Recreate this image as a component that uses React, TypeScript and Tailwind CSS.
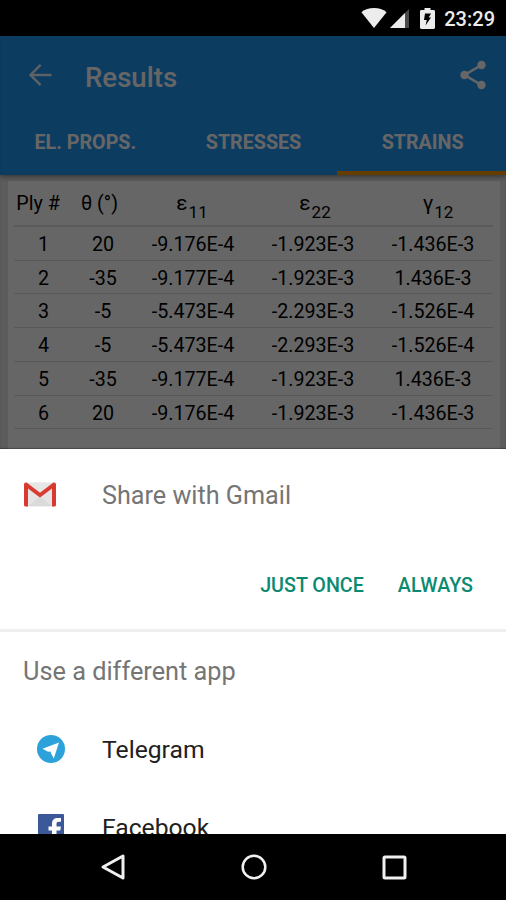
import React from "react";

interface PlyRow {
  angle: string;
  e11: string;
  e22: string;
  g12: string;
}

const PLIES: PlyRow[] = [
  { angle: "20", e11: "-9.176E-4", e22: "-1.923E-3", g12: "-1.436E-3" },
  { angle: "-35", e11: "-9.177E-4", e22: "-1.923E-3", g12: "1.436E-3" },
  { angle: "-5", e11: "-5.473E-4", e22: "-2.293E-3", g12: "-1.526E-4" },
  { angle: "-5", e11: "-5.473E-4", e22: "-2.293E-3", g12: "-1.526E-4" },
  { angle: "-35", e11: "-9.177E-4", e22: "-1.923E-3", g12: "1.436E-3" },
  { angle: "20", e11: "-9.176E-4", e22: "-1.923E-3", g12: "-1.436E-3" },
];

function StatusBar() {
  return (
    <div className="flex h-9 shrink-0 items-center justify-end bg-black pr-[11px] text-[#ececec]">
      <svg width="26" height="20" viewBox="0 0 26 20" fill="currentColor">
        <path d="M13 20 0.4 4.2C4 1.4 8 0 13 0s9 1.4 12.6 4.2z" />
      </svg>
      <svg className="ml-[3px]" width="19" height="19" viewBox="0 0 19 19">
        <path d="M0 19 19 0v19z" fill="#4a4a4a" />
        <path d="M0 19 15 4v15z" fill="currentColor" />
      </svg>
      <svg className="ml-[11px]" width="15" height="21" viewBox="0 0 15 21">
        <path d="M4.500 0h6v2h3.100c.8 0 1.400.6 1.400 1.400v16.200c0 .8-.6 1.400-1.400 1.400H1.400C.6 21 0 20.400 0 19.600V3.400C0 2.600.6 2 1.400 2h3.100z" fill="currentColor" />
        <path d="M5 5.500h6L8.700 9.500H11L5.500 17.500 6.800 12H4z" fill="#000" />
      </svg>
      <span className="ml-[9px] pt-[2px] text-[20px] leading-9 font-medium">23:29</span>
    </div>
  );
}

function Toolbar() {
  return (
    <div className="flex h-20 items-center pr-[19px] pl-7 text-white">
      <svg className="-mt-[2px] opacity-90" width="24" height="24" viewBox="0 0 24 24" fill="none" stroke="currentColor" strokeWidth="2.4">
        <path d="M23.500 12H2.500M12.600 1.900 2.500 12l10.100 10.100" />
      </svg>
      <h1 className="ml-[33px] flex-1 pt-[3px] text-[27.600px] font-medium">Results</h1>
      <svg className="-mt-[2px]" width="28" height="30" viewBox="0 0 28 30" fill="currentColor" stroke="none">
        <path d="M22.500 5 5.500 15l17 10" fill="none" stroke="currentColor" strokeWidth="2.600" />
        <circle cx="5.500" cy="15" r="4.200" />
        <circle cx="22.500" cy="5" r="4.200" />
        <circle cx="22.500" cy="25" r="4.200" />
      </svg>
    </div>
  );
}

function Tabs() {
  return (
    <div className="grid h-[59px] grid-cols-3 text-center text-[19.700px] leading-[53px] font-bold text-white">
      <div className="pl-[2px]">EL. PROPS.</div>
      <div className="pl-px">STRESSES</div>
      <div className="border-b-4 border-[#ff9800] pl-[2px]">STRAINS</div>
    </div>
  );
}

function Strain({ symbol, index }: { symbol: string; index: string }) {
  return (
    <>
      <span className="text-[21px]">{symbol}</span>
      <sub className="-bottom-[8px] ml-px text-[17px]">{index}</sub>
    </>
  );
}

function StrainTable() {
  return (
    <table className="w-[479px] table-fixed border-collapse text-center text-[19.700px] text-black">
      <colgroup>
        <col className="w-[59px]" />
        <col className="w-[60px]" />
        <col />
        <col />
        <col />
      </colgroup>
      <thead>
        <tr className="h-[45px] border-b-2 border-[#e0e0e0]">
          <th className="p-0 pt-[2px] pr-[11px] font-normal whitespace-nowrap">Ply #</th>
          <th className="p-0 pt-[2px] pr-[7px] font-normal whitespace-nowrap">θ (°)</th>
          <th className="p-0 pt-[2px] pr-[2px] font-normal">
            <Strain symbol="ε" index="11" />
          </th>
          <th className="p-0 pt-[2px] pl-[4px] font-normal">
            <Strain symbol="ε" index="22" />
          </th>
          <th className="p-0 pt-[2px] pl-[10px] font-normal">
            <Strain symbol="γ" index="12" />
          </th>
        </tr>
      </thead>
      <tbody>
        {PLIES.map((ply, i) => (
          <tr key={i} className="h-[33.750px] border-b border-[#dedede]">
            <td className="p-0 pt-[3px]">{i + 1}</td>
            <td className="p-0 pt-[3px]">{ply.angle}</td>
            <td className="p-0 pt-[3px]">{ply.e11}</td>
            <td className="p-0 pt-[3px]">{ply.e22}</td>
            <td className="p-0 pt-[3px]">{ply.g12}</td>
          </tr>
        ))}
      </tbody>
    </table>
  );
}

function ResultsScreen() {
  return (
    <div className="relative h-[413px] shrink-0 overflow-hidden bg-[#e6e6e6]">
      <div className="relative bg-[#2196f3] shadow-[0_2px_5px_rgba(0,0,0,0.4)]">
        <Toolbar />
        <Tabs />
      </div>
      <div className="mx-2 mr-[6px] mt-[6px] h-[300px] bg-white pl-[6px]">
        <StrainTable />
      </div>
      <div className="absolute inset-0 bg-black/60 shadow-[inset_0_-1px_1px_rgba(0,0,0,0.3)]" />
    </div>
  );
}

function GmailIcon() {
  return (
    <svg width="32" height="25" viewBox="0 0 32 25">
      <rect x="1" y="0.500" width="30" height="24" rx="1.500" fill="#e4e4e4" />
      <path d="M4 24 16 14.500 28 24z" fill="#dadada" />
      <path d="M3 1h26L16 12z" fill="#e6e6e6" />
      <path d="M0 2.500C0 .8 1.800-.1 3.200.9L16 10.800 28.800.9C30.200-.1 32 .8 32 2.500V23c0 .9-.6 1.500-1.500 1.500H28V6.500L16 15.500 4 6.500v18H1.500C.6 24.500 0 23.900 0 23z" fill="#d93a30" />
    </svg>
  );
}

function TelegramIcon() {
  return (
    <svg width="28" height="28" viewBox="0 0 28 28">
      <circle cx="14" cy="14" r="14" fill="#2ca1da" />
      <path d="M5.500 13.800 22 7.500 16.800 23.500 14 18.300 13.500 16.500 11 16.800z" fill="#fff" />
    </svg>
  );
}

function FacebookIcon() {
  return (
    <svg className="mt-px" width="26" height="26" viewBox="0 0 26 26">
      <rect width="26" height="26" rx="1" fill="#3b5998" />
      <path d="M14 26V16.500h-3.500v-4H14V9.800C14 6 16.200 4 19.600 4H23v3.800h-2.200c-1.700 0-2.300.8-2.300 2.200v2.500h4.400l-.6 4h-3.800V26z" fill="#fff" />
    </svg>
  );
}

function ShareSheet() {
  return (
    <div className="h-[385px] shrink-0 overflow-hidden bg-white">
      <div className="flex h-[91px] items-center pl-6">
        <GmailIcon />
        <span className="ml-[46px] pt-[2px] text-[25.200px] text-[#757575]">Share with Gmail</span>
      </div>
      <div className="flex h-[89px] items-center justify-end gap-[34px] pr-[33px] pt-[2px] text-[19.700px] font-medium text-[#0b8a71]">
        <button>JUST ONCE</button>
        <button>ALWAYS</button>
      </div>
      <div className="h-[3px] bg-[#efefef]" />
      <div className="flex h-[79px] items-center pt-[1px] pl-[23px] text-[25.300px] text-[#757575]">
        Use a different app
      </div>
      <div className="flex h-[75px] items-center pl-[37px]">
        <TelegramIcon />
        <span className="ml-[37px] pt-[3px] text-[24.700px] text-[#212121]">Telegram</span>
      </div>
      <div className="flex h-20 items-center pl-[38px]">
        <FacebookIcon />
        <span className="ml-[38px] pt-[4px] text-[24.700px] text-[#212121]">Facebook</span>
      </div>
    </div>
  );
}

function NavigationBar() {
  return (
    <div className="flex h-[66px] shrink-0 items-center justify-between bg-black pr-[99px] pl-[100px]">
      <svg width="26" height="28" viewBox="0 0 26 28" fill="none" stroke="#f0f0f0" strokeWidth="3" strokeLinejoin="round">
        <path d="M23 3v22L3 14z" />
      </svg>
      <svg width="26" height="26" viewBox="0 0 26 26" fill="none" stroke="#f0f0f0" strokeWidth="2.500">
        <circle cx="13" cy="13" r="11.300" />
      </svg>
      <svg width="25" height="25" viewBox="0 0 25 25" fill="none" stroke="#f0f0f0" strokeWidth="3">
        <rect x="2" y="2" width="21" height="21" rx="1" />
      </svg>
    </div>
  );
}

export default function App() {
  return (
    <div className="flex h-[900px] w-[506px] flex-col overflow-hidden bg-black font-['Roboto',sans-serif]">
      <StatusBar />
      <ResultsScreen />
      <ShareSheet />
      <NavigationBar />
    </div>
  );
}
